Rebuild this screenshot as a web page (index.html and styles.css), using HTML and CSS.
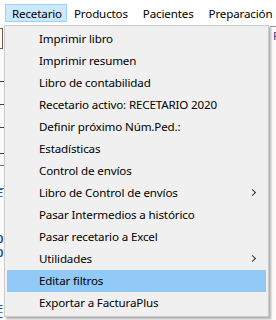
FILE: index.html
```html
<!DOCTYPE html>
<html lang="es">
<head>
  <meta charset="UTF-8" />
  <title>Recetario</title>
  <link rel="stylesheet" href="styles.css">
</head>
<body>
  <div class="ventana">
    <div class="menubar">
      <span class="menu activo">Recetario</span>
      <span class="menu">Productos</span>
      <span class="menu">Pacientes</span>
      <span class="menu">Preparación</span>
    </div>

    <!-- formulario de fondo (casi todo tapado por el menú) -->
    <div class="fondo">
      <div class="caja"></div>
      <div class="linea l1"></div>
      <div class="linea l2"></div>
      <div class="linea l3"></div>
      <div class="linea l4"></div>
      <div class="linea gris"></div>
      <div class="linea l5"></div>
      <div class="letra e1">E</div>
      <div class="letra c1">0</div>
      <div class="letra c2">0</div>
      <div class="letra e2">E</div>
      <div class="letra e3">E</div>
      <div class="derecha">P</div>
    </div>

    <div class="popup">
      <div class="item">Imprimir libro</div>
      <div class="item">Imprimir resumen</div>
      <div class="item">Libro de contabilidad</div>
      <div class="item">Recetario activo: RECETARIO 2020</div>
      <div class="item">Definir próximo Núm.Ped.:</div>
      <div class="item">Estadísticas</div>
      <div class="item">Control de envíos</div>
      <div class="item sub">Libro de Control de envíos</div>
      <div class="item">Pasar Intermedios a histórico</div>
      <div class="item">Pasar recetario a Excel</div>
      <div class="item sub">Utilidades</div>
      <div class="item sel">Editar filtros</div>
      <div class="item">Exportar a FacturaPlus</div>
    </div>
  </div>
</body>
</html>
```

FILE: styles.css
```css
body {
  margin: 0;
  font-family: "Noto Sans", "Open Sans", sans-serif;
  font-size: 11.6px;
  letter-spacing: -0.15px;
  color: #000;
  background: #fff;
}
.ventana {
  position: relative;
  width: 276px;
  height: 320px;
  overflow: hidden;
}
.menubar {
  display: flex;
  align-items: center;
  height: 25px;
  padding: 0 0 0 5px;
  background: #fff;
  white-space: nowrap;
}
.menu {
  padding: 0 7px 0 6px;
  height: 18px;
  line-height: 17px;
  margin-top: 1px;
  border: 1px solid transparent;
  box-sizing: border-box;
}
.menu.activo {
  background: #cce8ff;
  border-color: #99d1ff;
  width: 62px;
}
.fondo {
  position: relative;
  height: 295px;
  background: #fbfaf8;
}
.caja {
  position: absolute;
  left: 0;
  top: 3px;
  width: 2px;
  height: 19px;
  border: 1px solid #6b5a48;
  border-left: none;
}
.linea {
  position: absolute;
  left: 0;
  width: 4px;
  height: 1px;
  background: #1c3f8a;
}
.l1 { top: 56px; }
.l2 { top: 79px; }
.l3 { top: 102px; }
.l4 { top: 128px; }
.gris { top: 140px; background: #777; }
.l5 { top: 163px; background: #1a8ad8; }
.letra {
  position: absolute;
  left: -3px;
  color: #1c4fb0;
  font-size: 11px;
  line-height: 11px;
}
.e1 { top: 162px; }
.c1 { top: 208px; font-weight: bold; }
.c2 { top: 222px; font-weight: bold; }
.e2 { top: 278px; }
.e3 { top: 290px; }
.derecha {
  position: absolute;
  left: 270px;
  top: 1px;
  width: 10px;
  padding-left: 3px;
  border-top: 1px solid #999;
  color: #3c3c8c;
  line-height: 18px;
}
.popup {
  position: absolute;
  left: 4px;
  top: 25px;
  width: 259px;
  padding: 2px;
  background: #f0f0f0;
  border: 1px solid #ccc;
  box-shadow: 2px 2px 2px rgba(0, 0, 0, 0.3);
}
.item {
  position: relative;
  height: 22px;
  line-height: 22px;
  padding-left: 32px;
  white-space: nowrap;
}
.item.sel {
  background: #91c9f7;
}
.item.sub::after {
  content: "";
  position: absolute;
  right: 11px;
  top: 8px;
  width: 4px;
  height: 4px;
  border-right: 1px solid #333;
  border-top: 1px solid #333;
  transform: rotate(45deg);
}
```
